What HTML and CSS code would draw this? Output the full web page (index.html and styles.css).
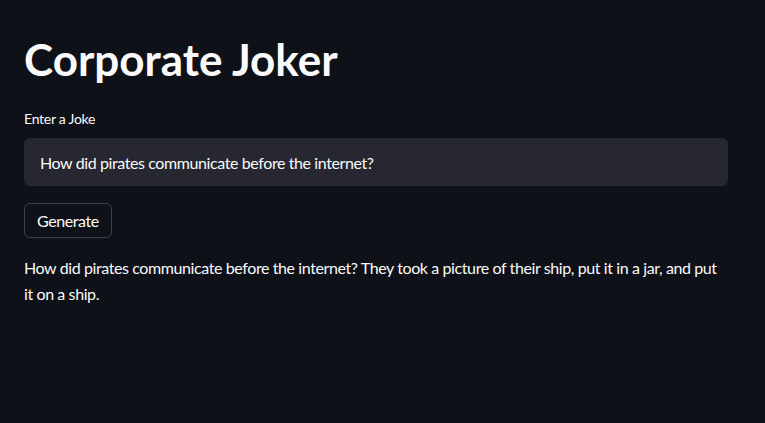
FILE: index.html
```html
<!DOCTYPE html>
<html>
<head>
<meta charset="utf-8">
<link rel="stylesheet" href="styles.css">
</head>
<body>
<main class="app">
  <h1 class="title">Corporate Joker</h1>
  <div class="field">
    <label class="label">Enter a Joke</label>
    <div class="input">How did pirates communicate before the internet?</div>
  </div>
  <button class="btn">Generate</button>
  <p class="output">How did pirates communicate before the internet? They took a picture of their ship, put it in a jar, and put it on a ship.</p>
</main>
</body>
</html>
```
FILE: styles.css
```css
html, body {
  margin: 0;
  padding: 0;
  background: #0e1117;
  color: #fafafa;
  font-family: "Lato", "Noto Sans", sans-serif;
}
.app {
  width: 704px;
  padding: 0 24px;
  display: flex;
  flex-direction: column;
  align-items: flex-start;
}
.title {
  margin: 30px 0 0 0;
  font-size: 44px;
  font-weight: 700;
  line-height: 58px;
}
.field {
  width: 100%;
  margin-top: 21px;
  display: flex;
  flex-direction: column;
}
.label {
  font-size: 14px;
  line-height: 20px;
  letter-spacing: -0.25px;
}
.input {
  margin-top: 9px;
  height: 48px;
  box-sizing: border-box;
  background: #262730;
  border-radius: 6px;
  padding: 0 16px;
  display: flex;
  align-items: center;
  font-size: 16px;
  letter-spacing: -0.4px;
}
.btn {
  margin-top: 17px;
  height: 35px;
  padding: 0 12px;
  background: transparent;
  border: 1px solid rgba(250,250,250,0.2);
  border-radius: 6px;
  color: #fafafa;
  font-family: inherit;
  font-size: 16px;
  letter-spacing: -0.4px;
}
.output {
  margin: 17px 0 0 0;
  font-size: 16px;
  line-height: 26px;
  letter-spacing: -0.4px;
}
```
